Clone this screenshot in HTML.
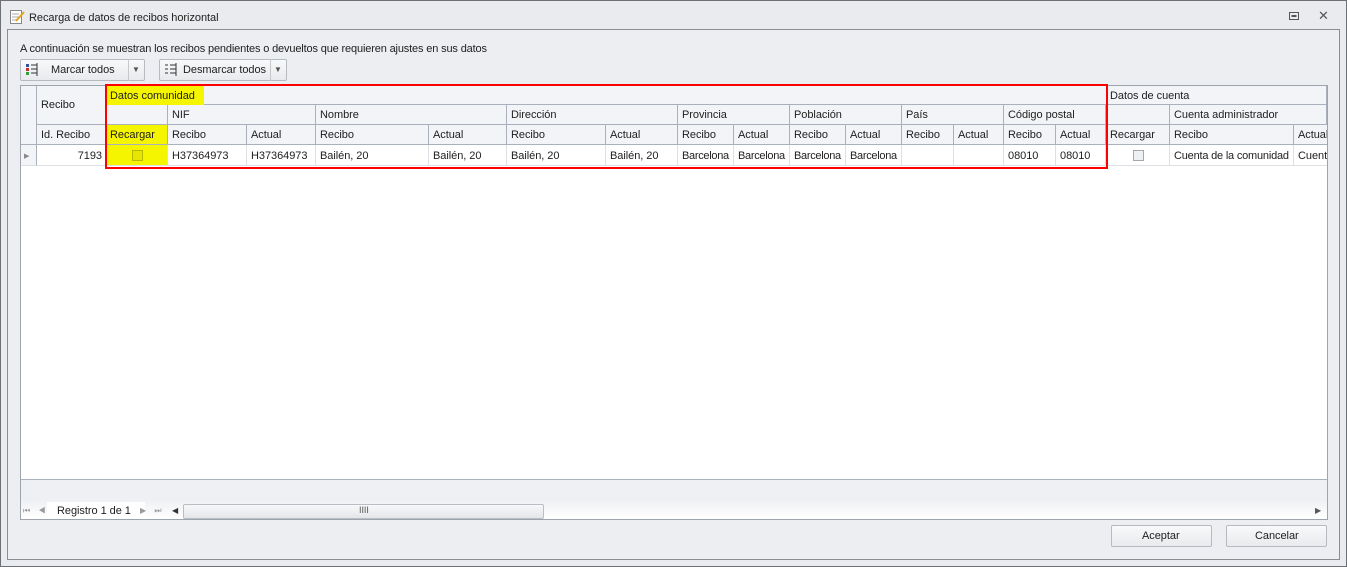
<!DOCTYPE html>
<html><head><meta charset="utf-8"><style>
*{margin:0;padding:0;box-sizing:border-box}
body{width:1347px;height:567px;overflow:hidden;background:#e9ebee;font-family:"Liberation Sans",sans-serif;font-size:11px;color:#1e1e1e;position:relative;letter-spacing:-0.05px}
.a{position:absolute}
.win{left:0;top:0;width:1347px;height:567px;border:1px solid #6d7075}
.panel{left:7px;top:29px;width:1333px;height:531px;border:1px solid #8a8d92;background:#eceef1}
.h{position:absolute;background:#f3f4f7;border-right:1px solid #aab1bd;border-bottom:1px solid #aab1bd;padding:4px 0 0 4px;white-space:nowrap;overflow:hidden;height:20px}
.d{position:absolute;background:#fff;border-right:1px solid #dcdfe4;border-bottom:1px solid #dcdfe4;padding:5px 0 0 4px;white-space:nowrap;overflow:hidden;height:21px;top:145px}
.btn{position:absolute;border:1px solid #b6bac1;border-radius:2px;background:linear-gradient(#f8f9fa,#e8eaed);height:22px}
.cb{position:absolute;width:11px;height:11px;border:1px solid #a4a8ae;background:#eef0f2}
</style></head><body>
<div class="a win"></div>
<svg class="a" style="left:9px;top:9px" width="16" height="16"><rect x="1.5" y="1.5" width="11" height="13" fill="#fff" stroke="#888"/><line x1="3" y1="5" x2="10" y2="5" stroke="#aaa"/><line x1="3" y1="8" x2="10" y2="8" stroke="#aaa"/><line x1="3" y1="11" x2="8" y2="11" stroke="#aaa"/><line x1="7" y1="12" x2="15" y2="3" stroke="#e3a41c" stroke-width="2"/></svg>
<div class="a" style="left:29px;top:12px;font-size:11px">Recarga de datos de recibos horizontal</div>
<svg class="a" style="left:1288px;top:11px" width="12" height="10"><rect x="1.5" y="1.5" width="9" height="7" fill="none" stroke="#555"/><rect x="3.5" y="4" width="5" height="2" fill="#555"/></svg>
<div class="a" style="left:1318px;top:8px;font-size:13px;color:#555">✕</div>
<div class="a panel"></div>
<div class="a" style="left:20px;top:43px;letter-spacing:-0.15px">A continuación se muestran los recibos pendientes o devueltos que requieren ajustes en sus datos</div>
<div class="btn" style="left:20px;top:59px;width:125px"></div>
<div class="a" style="left:128px;top:59px;width:1px;height:22px;background:#c4c7cc"></div>
<svg class="a" style="left:26px;top:63px" width="12" height="14"><rect x="0" y="1" width="3" height="3" fill="#3050a0"/><rect x="0" y="5" width="3" height="3" fill="#c03030"/><rect x="0" y="9" width="3" height="3" fill="#30a040"/><path d="M5 2h6M5 6h6M5 10h6" stroke="#333"/><path d="M11 0v13" stroke="#333"/></svg>
<div class="a" style="left:51px;top:64px;font-size:11px">Marcar todos</div>
<div class="a" style="left:132px;top:65px;font-size:8px;color:#555">▼</div>
<div class="btn" style="left:159px;top:59px;width:128px"></div>
<div class="a" style="left:270px;top:59px;width:1px;height:22px;background:#c4c7cc"></div>
<svg class="a" style="left:165px;top:63px" width="12" height="14"><path d="M0 2h3M0 6h3M0 10h3M5 2h6M5 6h6M5 10h6M11 0v13" stroke="#333"/></svg>
<div class="a" style="left:183px;top:64px;font-size:11px">Desmarcar todos</div>
<div class="a" style="left:274px;top:65px;font-size:8px;color:#555">▼</div>

<div class="a" style="left:20px;top:85px;width:1308px;height:435px;border:1px solid #9ea4ad;background:#fff"></div>
<div class="a" style="left:21px;top:86px;width:1306px;height:59px;background:#f3f4f7"></div>
<div class="h" style="left:21px;top:86px;width:16px;height:59px"></div>
<div class="h" style="left:37px;top:86px;width:69px;height:39px;padding-top:13px">Recibo</div>
<div class="h" style="left:106px;top:86px;width:1000px;height:19px;border-right:0"></div>
<div class="a" style="left:107px;top:86px;width:97px;height:19px;background:#f5f500"></div>
<div class="a" style="left:110px;top:90px">Datos comunidad</div>
<div class="h" style="left:1106px;top:86px;width:221px;height:19px">Datos de cuenta</div>
<div class="h" style="left:106px;top:105px;width:62px"></div>
<div class="h" style="left:168px;top:105px;width:148px">NIF</div>
<div class="h" style="left:316px;top:105px;width:191px">Nombre</div>
<div class="h" style="left:507px;top:105px;width:171px">Dirección</div>
<div class="h" style="left:678px;top:105px;width:112px">Provincia</div>
<div class="h" style="left:790px;top:105px;width:112px">Población</div>
<div class="h" style="left:902px;top:105px;width:102px">País</div>
<div class="h" style="left:1004px;top:105px;width:102px">Código postal</div>
<div class="h" style="left:1106px;top:105px;width:64px"></div>
<div class="h" style="left:1170px;top:105px;width:157px">Cuenta administrador</div>
<div class="h" style="left:37px;top:125px;width:69px">Id. Recibo</div>
<div class="h" style="left:106px;top:125px;width:62px;background:#f5f500">Recargar</div>
<div class="h" style="left:168px;top:125px;width:79px">Recibo</div>
<div class="h" style="left:247px;top:125px;width:69px">Actual</div>
<div class="h" style="left:316px;top:125px;width:113px">Recibo</div>
<div class="h" style="left:429px;top:125px;width:78px">Actual</div>
<div class="h" style="left:507px;top:125px;width:99px">Recibo</div>
<div class="h" style="left:606px;top:125px;width:72px">Actual</div>
<div class="h" style="left:678px;top:125px;width:56px">Recibo</div>
<div class="h" style="left:734px;top:125px;width:56px">Actual</div>
<div class="h" style="left:790px;top:125px;width:56px">Recibo</div>
<div class="h" style="left:846px;top:125px;width:56px">Actual</div>
<div class="h" style="left:902px;top:125px;width:52px">Recibo</div>
<div class="h" style="left:954px;top:125px;width:50px">Actual</div>
<div class="h" style="left:1004px;top:125px;width:52px">Recibo</div>
<div class="h" style="left:1056px;top:125px;width:50px">Actual</div>
<div class="h" style="left:1106px;top:125px;width:64px">Recargar</div>
<div class="h" style="left:1170px;top:125px;width:124px">Recibo</div>
<div class="h" style="left:1294px;top:125px;width:33px;border-right:0">Actual</div>

<div class="d" style="left:21px;width:16px;background:#f3f4f7;border-right:1px solid #aab1bd"><span style="font-size:7px;color:#888;position:relative;left:-1px;top:-1px">▶</span></div>
<div class="d" style="left:37px;width:69px;text-align:right;padding-right:3px">7193</div>
<div class="d" style="left:106px;width:62px;background:#f5f500"></div>
<div class="cb" style="left:132px;top:150px;background:#e6e600;border-color:#b8b800"></div>
<div class="d" style="left:168px;width:79px">H37364973</div>
<div class="d" style="left:247px;width:69px">H37364973</div>
<div class="d" style="left:316px;width:113px">Bailén, 20</div>
<div class="d" style="left:429px;width:78px">Bailén, 20</div>
<div class="d" style="left:507px;width:99px">Bailén, 20</div>
<div class="d" style="left:606px;width:72px">Bailén, 20</div>
<div class="d" style="left:678px;width:56px;letter-spacing:-0.3px">Barcelona</div>
<div class="d" style="left:734px;width:56px;letter-spacing:-0.3px">Barcelona</div>
<div class="d" style="left:790px;width:56px;letter-spacing:-0.3px">Barcelona</div>
<div class="d" style="left:846px;width:56px;letter-spacing:-0.3px">Barcelona</div>
<div class="d" style="left:902px;width:52px"></div>
<div class="d" style="left:954px;width:50px"></div>
<div class="d" style="left:1004px;width:52px">08010</div>
<div class="d" style="left:1056px;width:50px">08010</div>
<div class="d" style="left:1106px;width:64px"></div>
<div class="cb" style="left:1133px;top:150px"></div>
<div class="d" style="left:1170px;width:124px;letter-spacing:-0.2px">Cuenta de la comunidad</div>
<div class="d" style="left:1294px;width:33px;border-right:0">Cuenta</div>

<div class="a" style="left:105px;top:84px;width:1003px;height:85px;border:2px solid #f00"></div>

<div class="a" style="left:21px;top:479px;width:1306px;height:40px;background:#eef0f3;border-top:1px solid #aab1bd"></div>
<div class="a" style="left:21px;top:501px;width:1306px;height:18px;background:linear-gradient(#f0f1f4,#fff)"></div>
<div class="a" style="left:23px;top:506px;font-size:8px;color:#999;letter-spacing:3px">⏮ ◀</div>
<div class="a" style="left:47px;top:502px;width:98px;height:17px;background:#fff"></div>
<div class="a" style="left:57px;top:505px">Registro 1 de 1</div>
<div class="a" style="left:140px;top:506px;font-size:8px;color:#999;letter-spacing:3px">▶ ⏭</div>
<div class="a" style="left:172px;top:506px;font-size:8px;color:#333">◀</div>
<div class="a" style="left:183px;top:504px;width:361px;height:15px;border:1px solid #b9bdc4;border-radius:2px;background:linear-gradient(#f7f8f9,#e4e6ea)"></div>
<div class="a" style="left:359px;top:505px;font-size:9px;color:#555">IIII</div>
<div class="a" style="left:1315px;top:506px;font-size:8px;color:#555">▶</div>

<div class="btn" style="left:1111px;top:525px;width:101px;height:22px"></div>
<div class="a" style="left:1142px;top:530px;font-size:11px">Aceptar</div>
<div class="btn" style="left:1226px;top:525px;width:101px;height:22px"></div>
<div class="a" style="left:1255px;top:530px;font-size:11px">Cancelar</div>
</body></html>
